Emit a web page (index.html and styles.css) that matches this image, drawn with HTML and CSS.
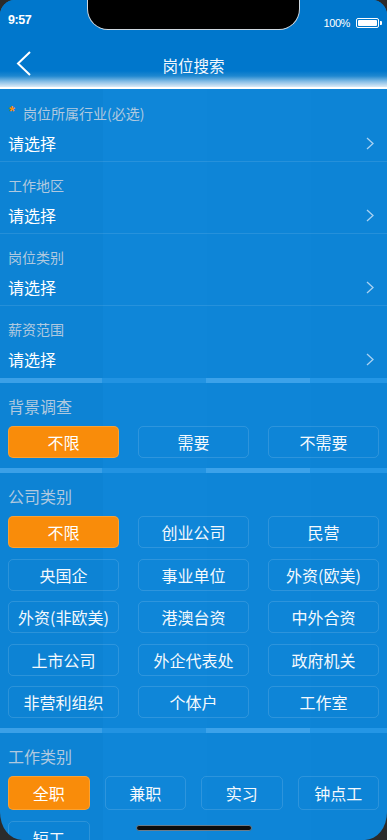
FILE: index.html
```html
<!DOCTYPE html>
<html lang="zh-CN">
<head>
<meta charset="utf-8">
<title>岗位搜索</title>
<link rel="stylesheet" href="styles.css">
</head>
<body>
<div class="screen">
  <div class="top">
    <div class="status">
      <span class="time">9:57</span>
      <span class="status-right">
        <span class="pct">100%</span>
        <span class="battery"><span class="battery-fill"></span></span>
        <span class="battery-nub"></span>
      </span>
    </div>
    <div class="nav">
      <span class="back">
        <svg width="16" height="26" viewBox="0 0 16 26"><polyline points="14,1 2,12.5 14,24" fill="none" stroke="#fff" stroke-width="2"/></svg>
      </span>
      <h1 class="title">岗位搜索</h1>
      <span></span>
    </div>
  </div>
  <div class="notch"></div>

  <div class="form">
    <div class="field">
      <div class="field-label"><span class="req">*</span>岗位所属行业(必选)</div>
      <div class="field-value"><span>请选择</span><svg class="chev" width="8" height="13" viewBox="0 0 8 13"><polyline points="1,1 7,6.5 1,12" fill="none" stroke="currentColor" stroke-width="1.3"/></svg></div>
    </div>
    <div class="field">
      <div class="field-label">工作地区</div>
      <div class="field-value"><span>请选择</span><svg class="chev" width="8" height="13" viewBox="0 0 8 13"><polyline points="1,1 7,6.5 1,12" fill="none" stroke="currentColor" stroke-width="1.3"/></svg></div>
    </div>
    <div class="field">
      <div class="field-label">岗位类别</div>
      <div class="field-value"><span>请选择</span><svg class="chev" width="8" height="13" viewBox="0 0 8 13"><polyline points="1,1 7,6.5 1,12" fill="none" stroke="currentColor" stroke-width="1.3"/></svg></div>
    </div>
    <div class="field last">
      <div class="field-label">薪资范围</div>
      <div class="field-value"><span>请选择</span><svg class="chev" width="8" height="13" viewBox="0 0 8 13"><polyline points="1,1 7,6.5 1,12" fill="none" stroke="currentColor" stroke-width="1.3"/></svg></div>
    </div>
  </div>

  <div class="band"></div>
  <section class="group">
    <h2 class="group-title">背景调查</h2>
    <div class="opts cols3">
      <div class="opt on">不限</div>
      <div class="opt">需要</div>
      <div class="opt">不需要</div>
    </div>
  </section>

  <div class="band"></div>
  <section class="group company">
    <h2 class="group-title">公司类别</h2>
    <div class="opts cols3">
      <div class="opt on">不限</div>
      <div class="opt">创业公司</div>
      <div class="opt">民营</div>
      <div class="opt">央国企</div>
      <div class="opt">事业单位</div>
      <div class="opt">外资(欧美)</div>
      <div class="opt">外资(非欧美)</div>
      <div class="opt">港澳台资</div>
      <div class="opt">中外合资</div>
      <div class="opt">上市公司</div>
      <div class="opt">外企代表处</div>
      <div class="opt">政府机关</div>
      <div class="opt">非营利组织</div>
      <div class="opt">个体户</div>
      <div class="opt">工作室</div>
    </div>
  </section>

  <div class="band"></div>
  <section class="group">
    <h2 class="group-title">工作类别</h2>
    <div class="opts cols4">
      <div class="opt on">全职</div>
      <div class="opt">兼职</div>
      <div class="opt">实习</div>
      <div class="opt">钟点工</div>
      <div class="opt">短工</div>
    </div>
  </section>

  <div class="home-indicator"></div>
</div>
</body>
</html>
```
FILE: styles.css
```css
* {
  box-sizing: border-box;
  margin: 0;
  padding: 0;
}

html, body {
  width: 387px;
  height: 840px;
  overflow: hidden;
}

body {
  background: #2b2b2b;
  font-family: "Noto Sans CJK SC", "Noto Sans", sans-serif;
  color: #fff;
}

.screen {
  position: relative;
  width: 387px;
  height: 840px;
  overflow: hidden;
  border-radius: 15px 15px 22px 22px / 15px 15px 28px 28px;
  background: linear-gradient(90deg, #0d83d4 0, #0d83d4 103px, #0f86d8 103px, #0f86d8 207px, #0e85d7 207px, #0e85d7 311px, #0d84d6 311px);
}

/* ---------- top bar ---------- */
.top {
  height: 90px;
  background: linear-gradient(180deg, #0077cc 0, #0077cc 71px, #1f88d0 76px, #8ec2e8 82px, #dcebf7 87px, #ffffff 87.5px, #ffffff 89px, rgba(14,133,214,0) 89px);
}

.status {
  height: 40px;
  display: flex;
  justify-content: space-between;
  align-items: center;
  padding: 0 5px 0 8px;
  font-family: "Liberation Sans", Arial, sans-serif;
}

.time {
  font-size: 12.5px;
  font-weight: 700;
  letter-spacing: -0.4px;
}

.status-right {
  display: flex;
  align-items: center;
  margin-top: 6px;
}

.pct {
  font-size: 11px;
  letter-spacing: -0.4px;
  margin-right: 6px;
}

.battery {
  width: 23px;
  height: 10px;
  border: 1.5px solid #fff;
  border-radius: 2px;
  padding: 1px;
  display: flex;
}

.battery-fill {
  flex: 1;
  background: #fff;
  border-radius: 1px;
}

.battery-nub {
  width: 2px;
  height: 4px;
  background: #fff;
  margin-left: 1px;
  border-radius: 0 1px 1px 0;
}

.nav {
  height: 50px;
  display: grid;
  grid-template-columns: 1fr auto 1fr;
  align-items: center;
}

.back {
  display: flex;
  align-items: center;
  padding-left: 16px;
  margin-top: -2px;
}

.title {
  font-size: 15.5px;
  font-weight: 400;
  line-height: 20px;
  color: #f2f7fc;
}

.notch {
  position: absolute;
  left: 87px;
  top: -2px;
  width: 213px;
  height: 32px;
  background: #000;
  border: 1px solid #cfd8e0;
  border-top: none;
  border-radius: 0 0 21px 21px;
}

/* ---------- form ---------- */
.field {
  padding: 13px 13px 8px 8px;
  border-bottom: 1px solid rgba(255, 255, 255, 0.1);
}

.field.last {
  border-bottom: none;
  padding-bottom: 9px;
}

.field-label {
  font-size: 14px;
  line-height: 20px;
  color: #b0c9df;
  display: flex;
  align-items: flex-start;
}

.req {
  color: #f98c0a;
  font-family: "Liberation Sans", Arial, sans-serif;
  font-weight: 700;
  font-size: 15px;
  line-height: 16px;
  width: 8px;
  margin-left: 1px;
  margin-right: 6px;
}

.field-value {
  margin-top: 10px;
  display: flex;
  justify-content: space-between;
  align-items: center;
  font-size: 16px;
  line-height: 20px;
  color: #fff;
}

.chev {
  color: #a9d2f2;
}

/* ---------- bands & groups ---------- */
.band {
  height: 5px;
  background: linear-gradient(90deg, #3ba0e7 0, #3ba0e7 102px, #2293e2 102px, #2293e2 206px, #3ca2ea 206px, #3ca2ea 310px, #2496e5 310px);
}

.group {
  padding: 13px 8px 10px;
}

.group-title {
  font-size: 16px;
  font-weight: 400;
  line-height: 20px;
  color: #b0c9df;
}

.opts {
  margin-top: 10px;
  display: grid;
}

.cols3 {
  grid-template-columns: repeat(3, 1fr);
  column-gap: 19px;
  row-gap: 10.5px;
}

.cols4 {
  grid-template-columns: repeat(4, 1fr);
  column-gap: 15px;
  row-gap: 11px;
}

.opt {
  height: 32px;
  display: flex;
  align-items: center;
  justify-content: center;
  border: 1px solid rgba(255, 255, 255, 0.13);
  border-radius: 5px;
  font-size: 16px;
  color: #f4f9fd;
  white-space: nowrap;
}

.cols4 .opt {
  height: 34px;
}

.opt.on {
  background: #f98c0a;
  border-color: rgba(255, 200, 120, 0.35);
  color: #fff;
}

.home-indicator {
  position: absolute;
  left: 136px;
  top: 825px;
  width: 116px;
  height: 6px;
  background: #0c0c0c;
  border: 1px solid #6a7c8a;
  border-radius: 3px;
}
```
